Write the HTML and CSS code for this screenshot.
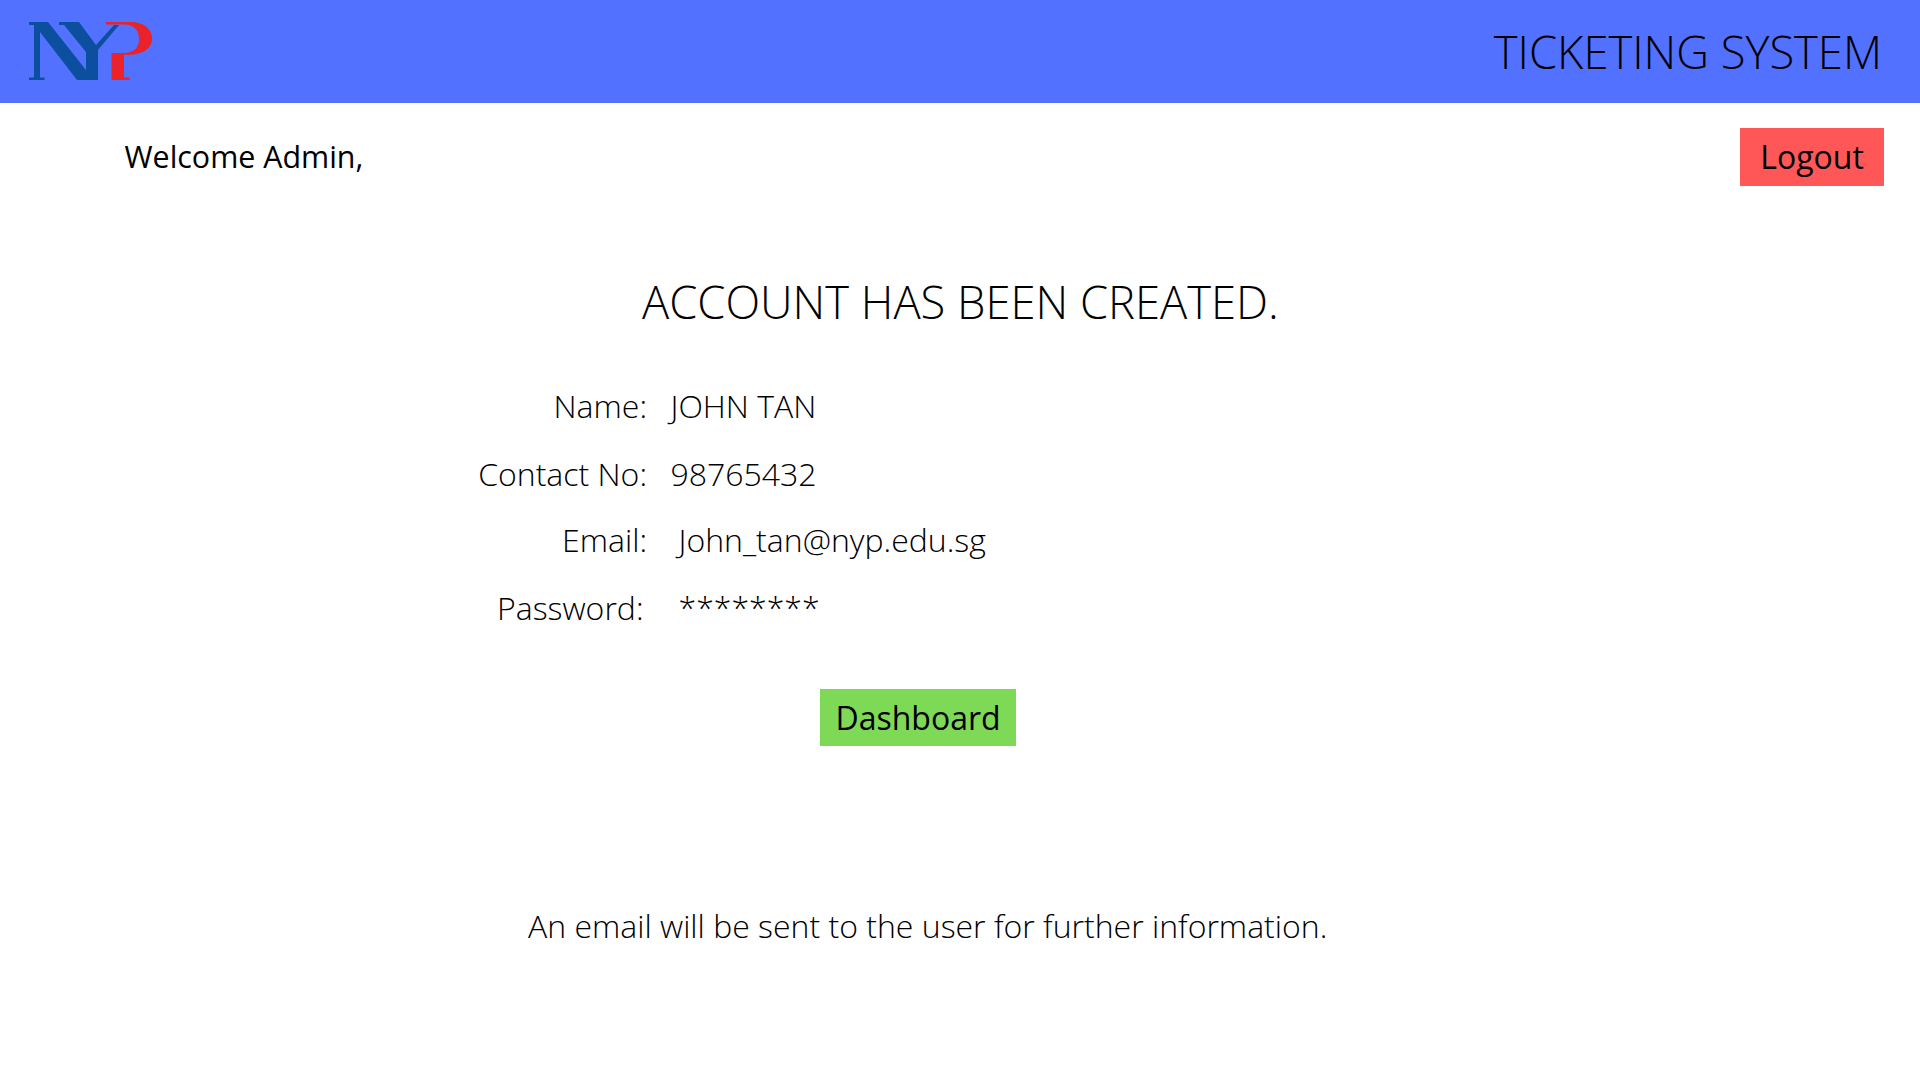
FILE: index.html
```html
<!DOCTYPE html>
<html lang="en">
<head>
<meta charset="utf-8">
<title>Ticketing System</title>
<link rel="stylesheet" href="styles.css">
</head>
<body>
<header class="header">
  <svg class="logo" viewBox="0 0 126 60" role="img" aria-label="NYP">
    <path fill="#0c4f9e" d="M0 0H19L57 48V30L35 3H30V0H50L67 23L85 3H90L69 28V58H48L11 10V55.500H15.500V58H0V55.500H5V3H0Z"/>
    <path fill="#e92329" d="M77 0H102C116 0 123 8 123 16.500C123 27 114 33 95 33V55.500H100.500V58H82.500V31H96C106 30 110 25 110 17C110 8 105 2.500 95 2.500H77Z"/>
  </svg>
  <div class="system-name">TICKETING SYSTEM</div>
</header>
<div class="toolbar">
  <p class="welcome">Welcome Admin,</p>
  <button class="button logout">Logout</button>
</div>
<main class="main">
  <h1 class="heading">ACCOUNT HAS BEEN CREATED.</h1>
  <dl class="details">
    <dt>Name:</dt><dd>JOHN TAN</dd>
    <dt>Contact No:</dt><dd>98765432</dd>
    <dt>Email:</dt><dd class="email">John_tan@nyp.edu.sg</dd>
    <dt class="password-label">Password:</dt><dd class="password">********</dd>
  </dl>
  <button class="button dashboard">Dashboard</button>
  <p class="note">An email will be sent to the user for further information.</p>
</main>
</body>
</html>
```
FILE: styles.css
```css
* { box-sizing: border-box; }
body {
  margin: 0;
  height: 1080px;
  overflow: hidden;
  background: #fff;
  color: #000;
  font-family: "Open Sans", sans-serif;
  font-size: 32px;
  font-weight: 300;
}
p, h1, dl, dd { margin: 0; }
.header {
  display: flex;
  justify-content: space-between;
  align-items: center;
  height: 102.5px;
  padding: 0 38px 0 29px;
  background: #5271ff;
}
.logo { width: 126px; height: 60px; margin-top: 2px; }
.system-name { margin-top: 2px; font-size: 45.3px; line-height: 60px; }
.toolbar {
  display: flex;
  justify-content: space-between;
  align-items: center;
  height: 58px;
  margin-top: 25.5px;
  padding: 0 36px 0 124.5px;
}
.welcome { font-size: 30.4px; font-weight: 400; line-height: 56px; }
.button {
  display: block;
  padding: 0;
  border: 0;
  color: #000;
  font: 400 32px/58px "Open Sans", sans-serif;
}
.logout { width: 144px; height: 58px; background: #ff5757; }
.main { padding-top: 86px; }
.heading {
  padding-left: 642px;
  font-size: 45.3px;
  font-weight: 300;
  line-height: 60px;
}
.details {
  display: grid;
  grid-template-columns: 647px 1fr;
  grid-template-rows: 68px 66px 68px 48px;
  column-gap: 23.5px;
  margin-top: 50px;
  line-height: 48px;
}
.details dt { text-align: right; }
.details .password-label { padding-right: 3.5px; }
.details .email { padding-left: 8px; }
.details .password { padding-left: 8px; line-height: 46px; }
.dashboard { width: 196px; height: 57px; margin: 57px 0 0 820px; line-height: 56px; background: #7ed957; }
.note { margin-top: 156px; padding-left: 528px; line-height: 48px; }
```
